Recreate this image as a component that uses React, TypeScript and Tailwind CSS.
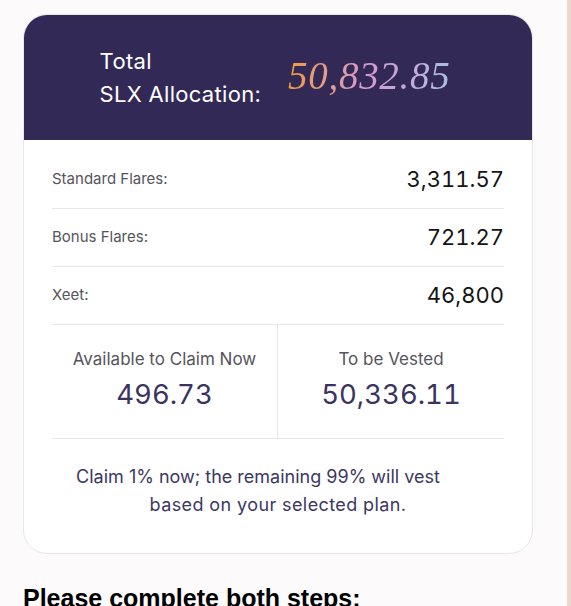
const ROWS = [
  { label: "Standard Flares:", value: "3,311.57" },
  { label: "Bonus Flares:", value: "721.27" },
  { label: "Xeet:", value: "46,800" },
];

function AllocationCard() {
  return (
    <div className="w-[510px] rounded-[24px] border border-[#e9e5ea] bg-white overflow-hidden">
      <div className="h-[125px] bg-[#322957] flex items-center justify-center gap-[27px] pr-[6px]">
        <div className="text-white text-[22px] leading-[33px] tracking-[0.3px]">
          <div>Total</div>
          <div>SLX Allocation:</div>
        </div>
        <div
          className="italic text-[39px] leading-none tracking-[0.7px] bg-gradient-to-r from-[#f29a35] via-[#d49ad0] to-[#a7bde2] bg-clip-text text-transparent pb-1"
          style={{ fontFamily: '"Liberation Serif", serif' }}
        >
          50,832.85
        </div>
      </div>

      <div className="px-7 pt-[11px]">
        {ROWS.map((r) => (
          <div key={r.label} className="h-[58px] flex items-center justify-between border-b border-[#e7e7e9]">
            <span className="text-[15px] text-[#55555b]">{r.label}</span>
            <span className="text-[22px] text-[#151515] tabular-nums">{r.value}</span>
          </div>
        ))}

        <div className="grid grid-cols-2 h-[114px] border-b border-[#e7e7e9]">
          <div className="flex flex-col items-center pt-[23px] border-r border-[#e7e7e9]">
            <span className="text-[17px] text-[#55555b] leading-[22px]">Available to Claim Now</span>
            <span className="text-[27.5px] text-[#3a335f] leading-[36px] mt-[6px] tabular-nums">496.73</span>
          </div>
          <div className="flex flex-col items-center pt-[23px]">
            <span className="text-[17px] text-[#55555b] leading-[22px]">To be Vested</span>
            <span className="text-[27.5px] text-[#3a335f] leading-[36px] mt-[6px] tabular-nums">50,336.11</span>
          </div>
        </div>

        <p className="text-center text-[18px] leading-[28px] text-[#3d3764] pt-[24px] pb-[34px]">
          <span className="inline-block pr-[40px]">Claim 1% now; the remaining 99% will vest</span>
          <br />
          <span className="tracking-[0.4px]">based on your selected plan.</span>
        </p>
      </div>
    </div>
  );
}

export default function App() {
  return (
    <div className="flex h-[606px] overflow-hidden bg-[#fdfafb]" style={{ fontFamily: "Inter, sans-serif" }}>
      <main className="flex-1 pt-[14px] pl-[23px]">
        <AllocationCard />
        <h2
          className="mt-[30px] text-[25px] font-bold text-black leading-[28px]"
          style={{ fontFamily: '"Liberation Sans", Arial, sans-serif' }}
        >
          Please complete both steps:
        </h2>
      </main>
      <aside className="w-[4px] bg-[#efd6cc]" />
    </div>
  );
}
